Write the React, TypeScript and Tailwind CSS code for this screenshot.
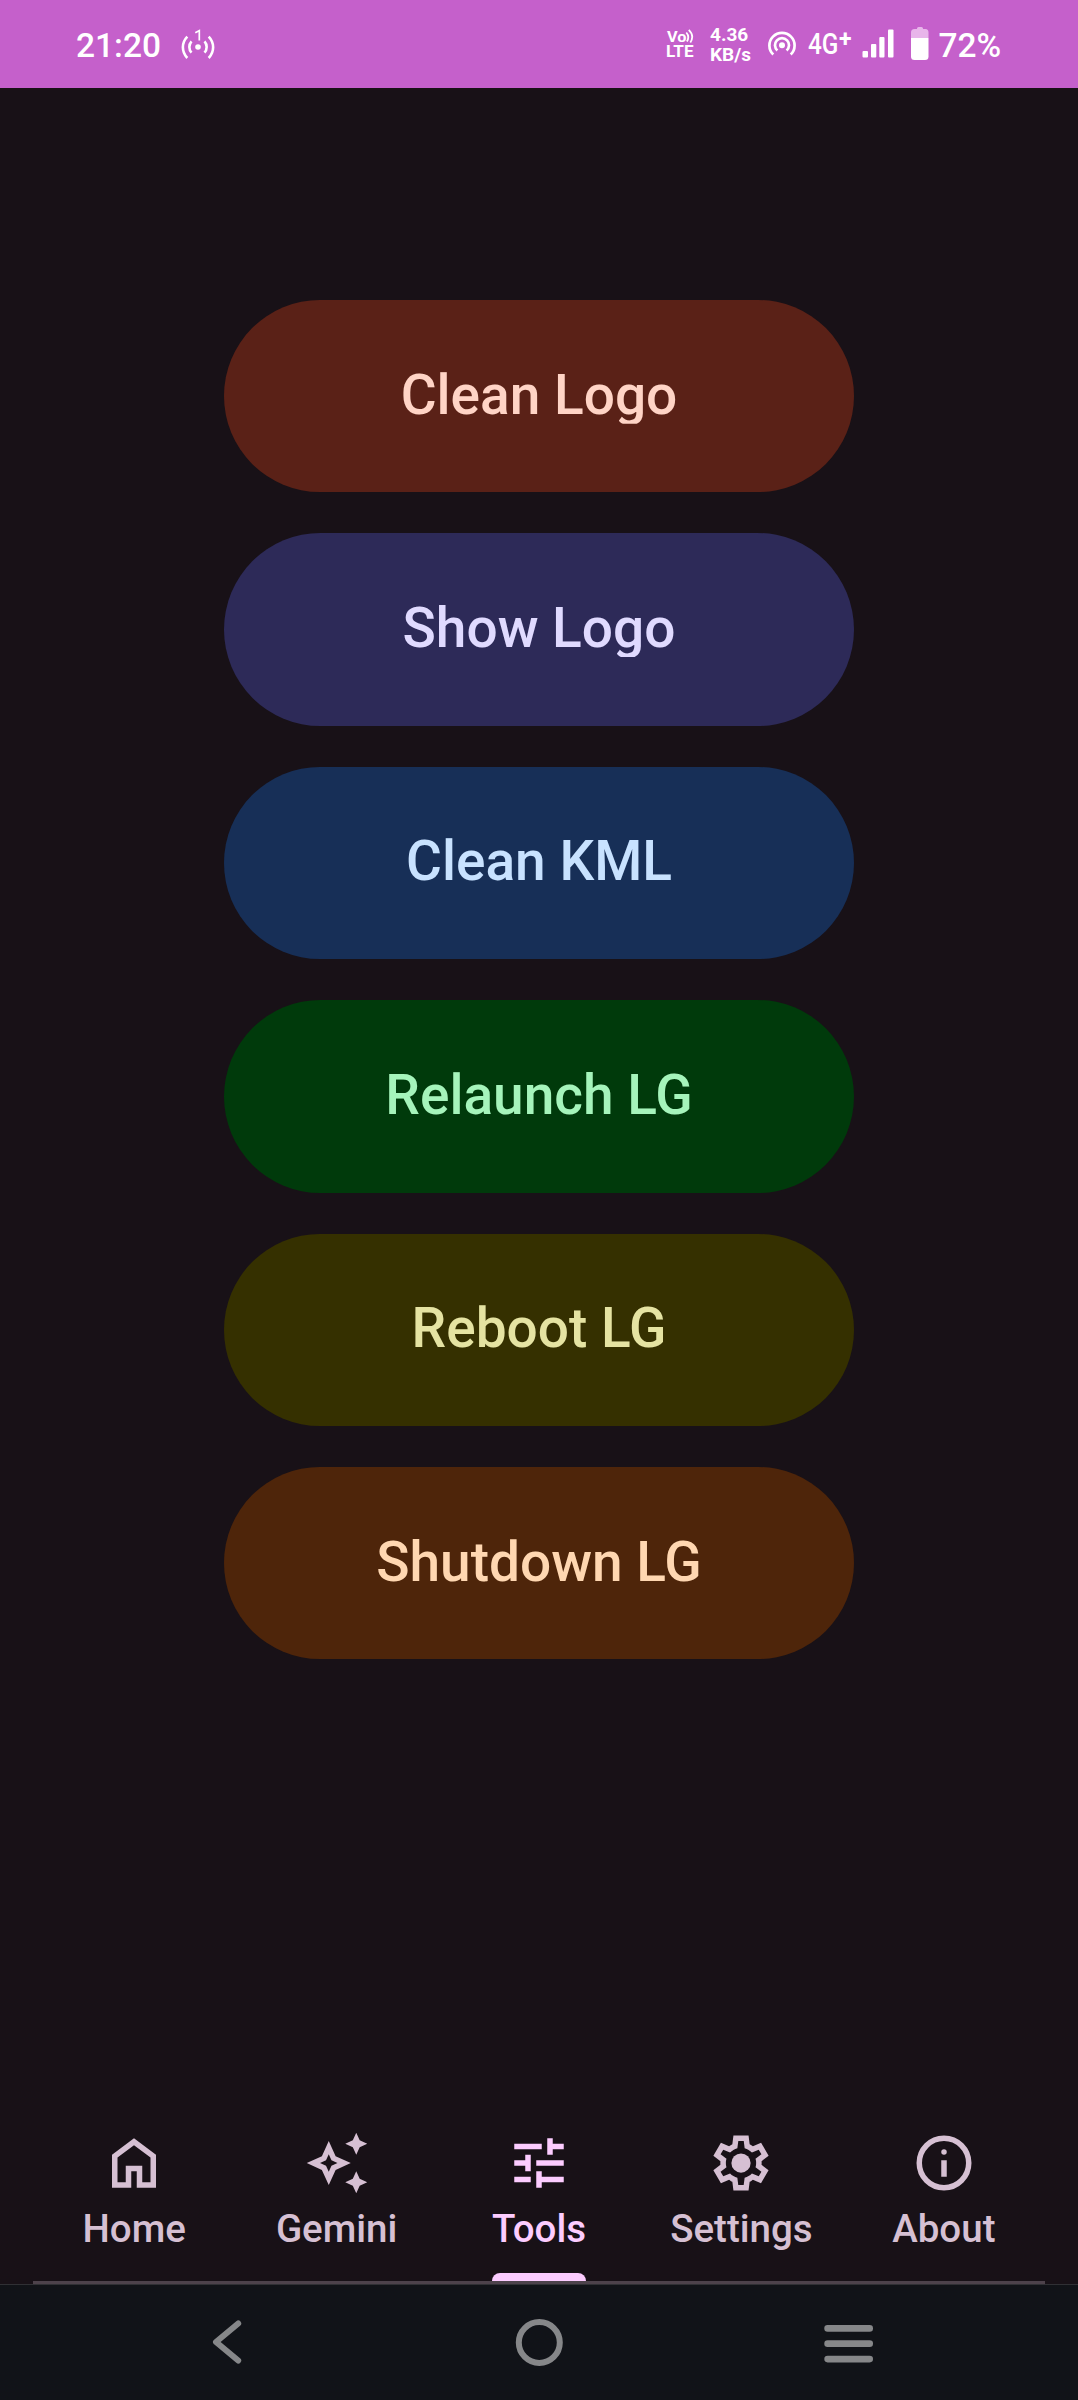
import React from "react";

const actions = [
  { label: "Clean Logo", cls: "bg-[#5a2117] text-[#ffd4c6]" },
  { label: "Show Logo", cls: "bg-[#2d2a58] text-[#e0daff]" },
  { label: "Clean KML", cls: "bg-[#172f57] text-[#c8e2ff]" },
  { label: "Relaunch LG", cls: "bg-[#003a0b] text-[#a5f4bb]" },
  { label: "Reboot LG", cls: "bg-[#353000] text-[#e5e3a2]" },
  { label: "Shutdown LG", cls: "bg-[#4e250a] text-[#ffd7b1]" },
];

const tabs = [
  {
    label: "Home",
    icon: <path d="M6 19h3v-6h6v6h3v-9l-6-4.5L6 10v9zm-2 2V9l8-6 8 6v12h-7v-6h-2v6H4z" />,
  },
  {
    label: "Gemini",
    icon: (
      <path
        fillRule="evenodd"
        d="M19 9l1.25-2.75L23 5l-2.75-1.25L19 1l-1.25 2.75L15 5l2.75 1.25L19 9zM19 15l-1.25 2.75L15 19l2.75 1.25L19 23l1.25-2.75L23 19l-2.75-1.25L19 15zM11.5 9.5L9 4 6.5 9.5 1 12l5.5 2.5L9 20l2.5-5.5L17 12l-5.5-2.5zM9.99 12.99L9 15.17l-.99-2.18L5.83 12l2.18-.99L9 8.83l.99 2.18 2.18.99-2.18.99z"
      />
    ),
  },
  {
    label: "Tools",
    active: true,
    icon: (
      <path d="M3 17v2h6v-2H3zM3 5v2h10V5H3zm10 16v-2h8v-2h-8v-2h-2v6h2zM7 9v2H3v2h4v2h2V9H7zm14 4v-2H11v2h10zm-6-4h2V7h4V5h-4V3h-2v6z" />
    ),
  },
  {
    label: "Settings",
    icon: (
      <>
        <path
          fillRule="evenodd"
          d="M9.25 22l-.4-3.2q-.325-.125-.612-.3-.288-.175-.563-.375L4.7 19.375l-2.75-4.75 2.575-1.95Q4.5 12.5 4.5 12.337v-.675q0-.162.025-.337L1.95 9.375l2.75-4.75 2.975 1.25q.275-.2.575-.375.3-.175.6-.3l.4-3.2h5.5l.4 3.2q.325.125.613.3.287.175.562.375l2.975-1.25 2.75 4.75-2.575 1.95q.025.175.025.337v.675q0 .163-.05.338l2.575 1.95-2.75 4.75-2.95-1.25q-.275.2-.575.375-.3.175-.6.3l-.4 3.2zM11 20h1.975l.35-2.65q.775-.2 1.437-.588.663-.387 1.213-.937l2.475 1.025.975-1.7-2.15-1.625q.125-.35.175-.738.05-.387.05-.787t-.05-.788q-.05-.387-.175-.737l2.15-1.625-.975-1.7-2.475 1.05q-.55-.575-1.213-.963-.662-.387-1.437-.587L13 4h-1.975l-.35 2.65q-.775.2-1.437.587-.663.388-1.213.938L5.55 7.15l-.975 1.7 2.15 1.6q-.125.375-.175.75-.05.375-.05.8 0 .4.05.775.05.375.175.75l-2.15 1.625.975 1.7 2.475-1.05q.55.575 1.213.963.662.387 1.437.587z"
        />
        <circle cx="12" cy="12" r="3.5" />
      </>
    ),
  },
  {
    label: "About",
    icon: (
      <>
        <circle cx="12" cy="12" r="9" fill="none" stroke="currentColor" strokeWidth="2" />
        <circle cx="12" cy="8" r="1" />
        <path d="M11 11h2v6h-2z" />
      </>
    ),
  },
];

function StatusBar() {
  return (
    <header className="flex h-[88px] shrink-0 items-start bg-[#c560cb] pl-[76px] font-medium text-white">
      <span className="mt-[26px] w-[105px] text-[33.5px] leading-[39px]">21:20</span>
      <svg className="mt-[28px] h-[34px] w-[34px]" viewBox="0 0 34 34" fill="none" stroke="#fff" strokeWidth="2.6">
        <circle cx="17" cy="19" r="2.8" fill="#fff" stroke="none" />
        <path d="M10.5 13.3a8.6 8.6 0 0 0 0 11.4M23.5 13.3a8.6 8.6 0 0 1 0 11.4M6.3 8.6C.4 14.8.4 23.6 6.3 30M27.7 8.6c5.9 6.2 5.9 15 0 21.4" />
        <path d="M14.3 4.8L18.3 2.6V12.5" strokeWidth="1.7" />
      </svg>
      <svg className="ml-[450px] mt-[26px] h-[34px] w-[30px]" viewBox="0 0 30 34">
        <g fill="#fff" fontFamily="Roboto, sans-serif" fontWeight="700">
          <text x="2" y="16" fontSize="15" textLength="19.5" lengthAdjust="spacingAndGlyphs">Vo</text>
          <text x="1" y="31" fontSize="16" textLength="27.5" lengthAdjust="spacingAndGlyphs">LTE</text>
        </g>
        <path d="M21.3 6.5q3.600 4 .6 9M23.800 3.800q6 6 1.500 12.700" fill="none" stroke="#fff" strokeWidth="1.800" />
      </svg>
      <div className="ml-[15px] mt-[25px] w-[58px] text-[19px] font-bold leading-[20px]">
        <div>4.36</div>
        <div>KB/s</div>
      </div>
      <svg className="mt-[29px] h-[30px] w-[30px]" viewBox="0 0 30 30" fill="none" stroke="#fff" strokeWidth="2.7">
        <circle cx="14" cy="16.3" r="3" fill="#fff" stroke="none" />
        <path d="M9.400 21.500a7 7 0 1 1 9.200 0M5.300 25.600a12.600 12.600 0 1 1 17.400 0" />
      </svg>
      <div className="ml-[10px] mt-[27px] flex w-[55px] items-start">
        <span className="w-[31px] origin-left scale-x-[0.84] text-[29px] font-medium leading-[34px]">4G</span>
        <span className="text-[23px] font-bold leading-[26px]">+</span>
      </div>
      <svg className="ml-[-1px] mt-[29px] h-[29px] w-[32px]" viewBox="0 0 32 29" fill="#fff">
        <rect x="0.5" y="22" width="5.500" height="6.500" rx="1" />
        <rect x="9" y="15" width="5.300" height="13.500" rx="1" />
        <rect x="17.300" y="8" width="5.200" height="20.500" rx="1" />
        <rect x="26" y="0.500" width="5.500" height="28" rx="1" />
      </svg>
      <svg className="ml-[17px] mt-[26px] h-[35px] w-[18px]" viewBox="0 0 18 35">
        <path d="M6 2.500Q6 1 7.500 1h3Q12 1 12 2.500V3h2.500Q17.500 3 17.500 6.500V12H0V6.500Q0 3 3.500 3H6z" fill="#e8b5ea" />
        <path d="M0 12h17.500v18.500q0 3.500-3.500 3.500H3.500Q0 34 0 30.500z" fill="#fff" />
      </svg>
      <span className="ml-[9.5px] mt-[26px] text-[33.5px] leading-[39px]">72%</span>
    </header>
  );
}

function TabBar() {
  return (
    <nav className="mx-[33px] flex h-[172px] shrink-0 border-b-[3px] border-[#4d424b]">
      {tabs.map((t) => (
        <div
          key={t.label}
          className={
            "flex flex-1 flex-col items-center pt-[18px] " + (t.active ? "text-[#fcccff]" : "text-[#d6c0d3]")
          }
        >
          <svg className="h-[66px] w-[66px] shrink-0" viewBox="0 0 24 24" fill="currentColor">
            {t.icon}
          </svg>
          <span className="mt-[8px] text-[38.5px] font-medium leading-[50px]">{t.label}</span>
          {t.active && <div className="mt-auto h-[8px] w-[94px] rounded-t-[8px] bg-current" />}
        </div>
      ))}
    </nav>
  );
}

function SystemNav() {
  return (
    <footer className="flex h-[116px] shrink-0 items-start justify-between border-t border-[#303034] bg-[#111318] pl-[197px] pr-[199px] pt-[27px]">
      <svg className="h-[60px] w-[60px]" viewBox="0 0 60 60" fill="none" stroke="#868789" strokeWidth="6" strokeLinecap="round" strokeLinejoin="round">
        <path d="M41.200 11.500L19 30L41.200 48.500" />
      </svg>
      <svg className="h-[60px] w-[60px]" viewBox="0 0 60 60" fill="none" stroke="#868789" strokeWidth="6">
        <circle cx="31.300" cy="30.500" r="20.500" />
      </svg>
      <svg className="h-[60px] w-[60px]" viewBox="0 0 60 60" fill="#868789">
        <rect x="5.300" y="13" width="48.700" height="6.700" rx="3.300" />
        <rect x="5.300" y="28.300" width="48.700" height="6.700" rx="3.300" />
        <rect x="5.300" y="43.700" width="48.700" height="6.700" rx="3.300" />
      </svg>
    </footer>
  );
}

export default function App() {
  return (
    <div className="flex h-[2400px] w-[1078px] flex-col overflow-hidden bg-[#181117] font-['Roboto',sans-serif]">
      <StatusBar />
      <main className="flex flex-1 flex-col items-center gap-[41px] pt-[212px]">
        {actions.map((a) => (
          <button
            key={a.label}
            className={"flex h-[192.4px] w-[630px] items-center justify-center rounded-full pb-[3px] text-[55px] font-medium " + a.cls}
          >
            <span className="leading-[66px] [clip-path:inset(0_0_4px_0)]">{a.label}</span>
          </button>
        ))}
      </main>
      <TabBar />
      <SystemNav />
    </div>
  );
}
